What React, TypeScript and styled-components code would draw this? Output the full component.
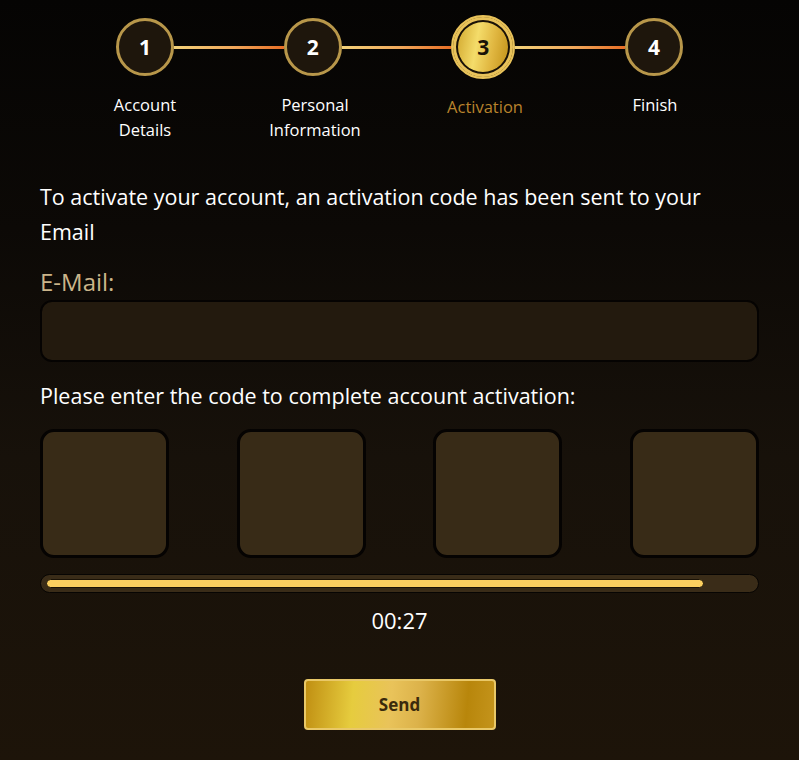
import React from 'react';
import styled, { createGlobalStyle } from 'styled-components';

const GlobalStyle = createGlobalStyle`
    html, body {
        margin: 0;
        padding: 0;
    }
    body {
        background: linear-gradient(180deg, #050403 0%, #0c0906 30%, #17110a 60%, #1d1409 100%);
        min-height: 760px;
        font-family: "Open Sans", "Noto Sans", sans-serif;
        color: #ffffff;
    }
`

const Page = styled.div`
    width: 799px;
    min-height: 760px;
    box-sizing: border-box;
`

const Stepper = styled.div`
    padding-top: 15px;
`

const Track = styled.div`
    display: flex;
    align-items: center;
    margin: 0 116px;
    height: 64px;
`

const Circle = styled.div<{ $active?: boolean }>`
    box-sizing: border-box;
    flex: none;
    display: flex;
    align-items: center;
    justify-content: center;
    border-radius: 50%;
    font-weight: 700;
    font-size: 21px;
    width: ${p => (p.$active ? '64px' : '58px')};
    height: ${p => (p.$active ? '64px' : '58px')};
    color: ${p => (p.$active ? '#1a1207' : '#ffffff')};
    background: ${p => (p.$active
        ? 'linear-gradient(100deg, #c99a1e 0%, #f4dc6a 40%, #e0b640 65%, #b8860b 100%)'
        : '#1e160c')};
    border: ${p => (p.$active ? '2px solid #e8c25a' : '3px solid #b8974a')};
    box-shadow: ${p => (p.$active ? 'inset 0 0 0 3px #e8c25a, inset 0 0 0 5px #1a1207' : 'none')};
`

const Line = styled.div`
    flex: 1;
    height: 3px;
    background: linear-gradient(90deg, #f3d27a 0%, #f0a65a 55%, #e86e25 100%);
`

const Labels = styled.div`
    display: grid;
    grid-template-columns: repeat(4, 170px);
    padding-left: 60px;
    margin-top: 13px;
`

const Label = styled.div<{ $active?: boolean }>`
    text-align: center;
    font-size: 16.5px;
    line-height: 25px;
    color: ${p => (p.$active ? '#b8832c' : '#ffffff')};
    padding-top: ${p => (p.$active ? '2px' : '0')};
`

const Content = styled.div`
    padding: 0 40px;
    margin-top: 37px;
`

const Intro = styled.p`
    margin: 0;
    font-size: 21.5px;
    line-height: 35px;
    color: #ffffff;
`

const FieldLabel = styled.div`
    margin-top: 18px;
    font-size: 24px;
    line-height: 30px;
    color: #cbb58a;
`

const Input = styled.div`
    box-sizing: border-box;
    margin-top: 3px;
    height: 62px;
    border-radius: 12px;
    background: #231a0e;
    border: 2px solid #050302;
`

const CodeLabel = styled.div`
    margin-top: 19px;
    font-size: 21.5px;
    line-height: 30px;
`

const Codes = styled.div`
    display: flex;
    justify-content: space-between;
    margin-top: 18px;
`

const CodeBox = styled.div`
    box-sizing: border-box;
    width: 129px;
    height: 129px;
    border-radius: 14px;
    background: #382b17;
    border: 3px solid #050302;
`

const Progress = styled.div`
    box-sizing: border-box;
    margin-top: 16px;
    height: 19px;
    border-radius: 10px;
    background: #3a2c18;
    border: 1px solid #070503;
    padding: 4px 5px;
`

const Fill = styled.div`
    height: 9px;
    border-radius: 5px;
    background: #fcd060;
    border: 1px solid #1a1206;
    box-sizing: border-box;
`

const Timer = styled.div`
    text-align: center;
    margin-top: 13px;
    font-size: 22px;
    line-height: 28px;
`

const Actions = styled.div`
    display: flex;
    justify-content: center;
    margin-top: 45px;
`

const SendButton = styled.button`
    width: 192px;
    height: 51px;
    border-radius: 4px;
    border: 2px solid #e9c868;
    background: linear-gradient(95deg, #c08f12 0%, #e6cc3e 25%, #e9c35a 45%, #dcb24a 60%, #b8860b 85%, #c4941c 100%);
    color: #3a2a0c;
    font-family: "Open Sans", "Noto Sans", sans-serif;
    font-weight: 700;
    font-size: 17px;
    cursor: pointer;
`

const steps = [
    { n: 1, label: ['Account', 'Details'] },
    { n: 2, label: ['Personal', 'Information'] },
    { n: 3, label: ['Activation'] },
    { n: 4, label: ['Finish'] },
]

const activeStep = 3

export default function App() {
    const remaining = 27
    const progress = 0.93

    return (
        <>
            <GlobalStyle />
            <Page>
                <Stepper>
                    <Track>
                        {steps.map((s, i) => (
                            <React.Fragment key={s.n}>
                                {i > 0 && <Line />}
                                <Circle $active={s.n === activeStep}>{s.n}</Circle>
                            </React.Fragment>
                        ))}
                    </Track>
                    <Labels>
                        {steps.map(s => (
                            <Label key={s.n} $active={s.n === activeStep}>
                                {s.label.map(l => <div key={l}>{l}</div>)}
                            </Label>
                        ))}
                    </Labels>
                </Stepper>

                <Content>
                    <Intro>To activate your account, an activation code has been sent to your Email</Intro>
                    <FieldLabel>E-Mail:</FieldLabel>
                    <Input />
                    <CodeLabel>Please enter the code to complete account activation:</CodeLabel>
                    <Codes>
                        <CodeBox />
                        <CodeBox />
                        <CodeBox />
                        <CodeBox />
                    </Codes>
                    <Progress>
                        <Fill style={{ width: `${progress * 100}%` }} />
                    </Progress>
                    <Timer>00:{remaining}</Timer>
                    <Actions>
                        <SendButton>Send</SendButton>
                    </Actions>
                </Content>
            </Page>
        </>
    )
}
